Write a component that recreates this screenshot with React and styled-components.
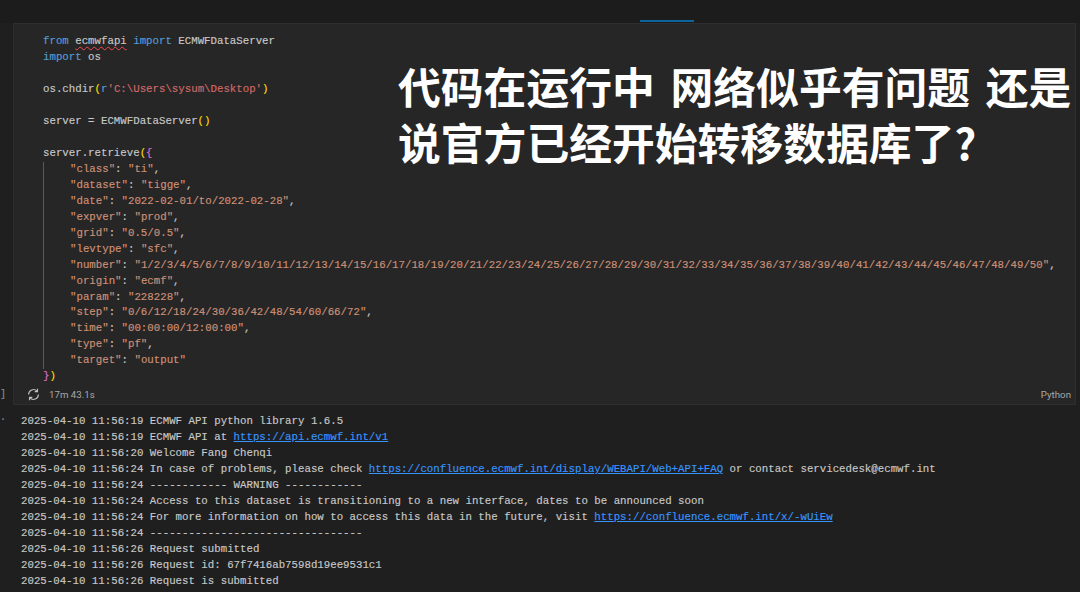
import React from 'react'
import styled, { createGlobalStyle } from 'styled-components'

const Global = createGlobalStyle`
  html, body {
    margin: 0;
    padding: 0;
    background: #1e1e1e;
    overflow: hidden;
  }
`

const Page = styled.div`
  width: 1080px;
  height: 592px;
  position: relative;
  overflow: hidden;
  display: flex;
  flex-direction: column;
  background: #1f1f1f;
  font-family: "Liberation Mono", "DejaVu Sans Mono", monospace;
  font-size: 10.74px;
  -webkit-text-stroke: 0.15px currentColor;
`

const TabStrip = styled.div`
  height: 23px;
  flex: none;
  padding-left: 640px;
  display: flex;
  align-items: flex-end;
  background: #1c1c1c;
`

const TabMark = styled.div`
  width: 54px;
  height: 2px;
  margin-bottom: 1px;
  background: #0e639c;
`

const Cell = styled.section`
  height: 382px;
  flex: none;
  box-sizing: border-box;
  margin: 0 4px 0 13px;
  padding-top: 10px;
  display: flex;
  flex-direction: column;
  background: #262626;
  border: 1px solid #2e2e2f;
`

const Code = styled.div`
  flex: 1;
  padding-left: 29px;
  line-height: 15.97px;
  color: #c8c8c8;
  white-space: pre;
`

const Line = styled.div`
  height: 15.97px;
`

const Dict = styled.div`
  padding-left: 26px;
  border-left: 1px solid #5a5a5a;
`

const Kw = styled.span`
  color: #569cd6;
`

const Str = styled.span`
  color: #ce9178;
`

const Raw = styled.span`
  color: #d16969;
`

const Brace = styled.span`
  color: ${p => p.$c || '#ffd700'};
`

const Squiggle = styled.span`
  text-decoration: underline wavy #f14c4c 1px;
  text-underline-offset: 2px;
`

const CellFooter = styled.div`
  height: 19px;
  flex: none;
  display: flex;
  align-items: center;
  padding: 0 4px 0 13px;
  color: #a8a8a8;
  font-family: Roboto, "Liberation Sans", sans-serif;
  font-size: 9.7px;
  -webkit-text-stroke: 0;
`

const Timer = styled.span`
  margin-left: 9px;
  flex: 1;
`

const Output = styled.div`
  flex: 1;
  padding: 9px 0 0 21px;
  line-height: 15.97px;
  color: #c8c8c8;
  white-space: pre;
`

const Link = styled.a`
  color: #3794ff;
  text-decoration: underline;
`

const Gutter = styled.span`
  position: absolute;
  left: 0;
  top: ${p => p.$top}px;
  color: #8a8a8a;
  font-size: 10px;
  line-height: 12px;
`

const Caption = styled.div`
  position: absolute;
  left: 398px;
  top: 57px;
  font-family: "Noto Sans CJK SC", "Liberation Sans", sans-serif;
  font-size: 42.8px;
  font-weight: 700;
  line-height: 56px;
  word-spacing: 6px;
  color: #ffffff;
  white-space: nowrap;
  -webkit-text-stroke: 0;
`

const SpinIcon = () => (
  <svg width="13" height="13" viewBox="0 0 16 16" fill="none" stroke="#c0c0c0" strokeWidth="1.4">
    <path d="M14 8a6 6 0 0 1-10.4 4.1" />
    <path d="M2 8a6 6 0 0 1 10.4-4.1" />
    <path d="M12.9 1v3.4H9.5" />
    <path d="M3.1 15v-3.4h3.4" />
  </svg>
)

const dictLines = [
  ['"class"', '"ti"', ','],
  ['"dataset"', '"tigge"', ','],
  ['"date"', '"2022-02-01/to/2022-02-28"', ','],
  ['"expver"', '"prod"', ','],
  ['"grid"', '"0.5/0.5"', ','],
  ['"levtype"', '"sfc"', ','],
  ['"number"', '"1/2/3/4/5/6/7/8/9/10/11/12/13/14/15/16/17/18/19/20/21/22/23/24/25/26/27/28/29/30/31/32/33/34/35/36/37/38/39/40/41/42/43/44/45/46/47/48/49/50"', ','],
  ['"origin"', '"ecmf"', ','],
  ['"param"', '"228228"', ','],
  ['"step"', '"0/6/12/18/24/30/36/42/48/54/60/66/72"', ','],
  ['"time"', '"00:00:00/12:00:00"', ','],
  ['"type"', '"pf"', ','],
  ['"target"', '"output"', ''],
]

const logLines = [
  ['2025-04-10 11:56:19 ECMWF API python library 1.6.5'],
  ['2025-04-10 11:56:19 ECMWF API at ', 'https://api.ecmwf.int/v1'],
  ['2025-04-10 11:56:20 Welcome Fang Chenqi'],
  ['2025-04-10 11:56:24 In case of problems, please check ', 'https://confluence.ecmwf.int/display/WEBAPI/Web+API+FAQ', ' or contact servicedesk@ecmwf.int'],
  ['2025-04-10 11:56:24 ------------ WARNING ------------'],
  ['2025-04-10 11:56:24 Access to this dataset is transitioning to a new interface, dates to be announced soon'],
  ['2025-04-10 11:56:24 For more information on how to access this data in the future, visit ', 'https://confluence.ecmwf.int/x/-wUiEw'],
  ['2025-04-10 11:56:24 ---------------------------------'],
  ['2025-04-10 11:56:26 Request submitted'],
  ['2025-04-10 11:56:26 Request id: 67f7416ab7598d19ee9531c1'],
  ['2025-04-10 11:56:26 Request is submitted'],
]

export default function App() {
  return (
    <Page>
      <Global />
      <TabStrip><TabMark /></TabStrip>
      <Cell>
        <Code>
          <Line><Kw>from</Kw> <Squiggle>ecmwfapi</Squiggle> <Kw>import</Kw> ECMWFDataServer</Line>
          <Line><Kw>import</Kw> os</Line>
          <Line> </Line>
          <Line>os.chdir<Brace>(</Brace><Kw>r</Kw><Raw>'C:\Users\sysum\Desktop'</Raw><Brace>)</Brace></Line>
          <Line> </Line>
          <Line>server = ECMWFDataServer<Brace>()</Brace></Line>
          <Line> </Line>
          <Line>server.retrieve<Brace>(</Brace><Brace $c="#da70d6">{'{'}</Brace></Line>
          <Dict>
            {dictLines.map(([k, v, end]) => (
              <Line key={k}><Str>{k}</Str>: <Str>{v}</Str>{end}</Line>
            ))}
          </Dict>
          <Line><Brace $c="#da70d6">{'}'}</Brace><Brace>)</Brace></Line>
        </Code>
        <CellFooter>
          <SpinIcon />
          <Timer>17m 43.1s</Timer>
          <span>Python</span>
        </CellFooter>
      </Cell>
      <Output>
        {logLines.map((l, i) => (
          <Line key={i}>
            {l[0]}
            {l[1] && <Link>{l[1]}</Link>}
            {l[2]}
          </Line>
        ))}
      </Output>
      <Gutter $top={389}>]</Gutter>
      <Gutter $top={414}>·</Gutter>
      <Caption>
        代码在运行中 网络似乎有问题 还是<br />
        说官方已经开始转移数据库了?
      </Caption>
    </Page>
  )
}
